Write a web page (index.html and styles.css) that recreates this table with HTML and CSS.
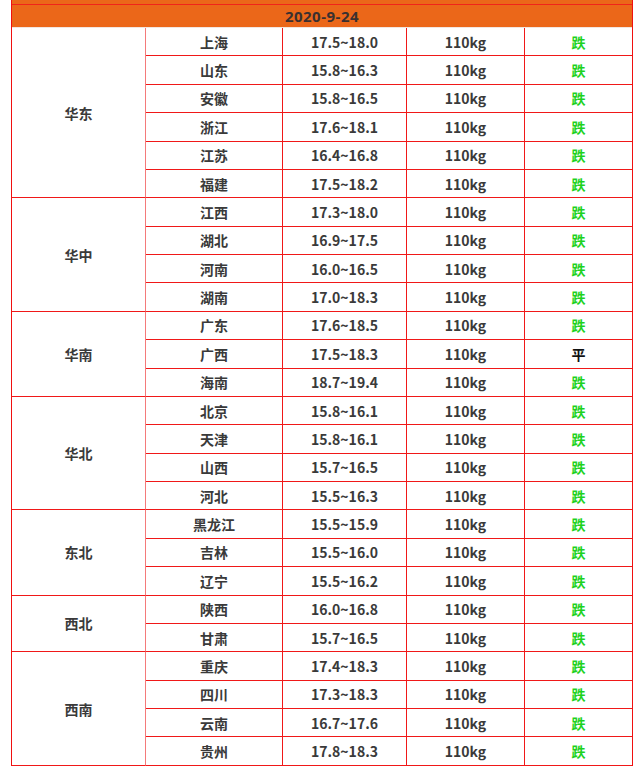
FILE: index.html
```html
<!DOCTYPE html>
<html lang="zh-CN">
<head>
<meta charset="utf-8">
<title>猪价</title>
<link rel="stylesheet" href="styles.css">
</head>
<body>
<div class="sheet">
  <div class="cap"></div>
  <div class="date">2020-9-24</div>
  <div class="grid">
    <div class="region r6">华东</div>
    <div class="c">上海</div><div class="c">17.5~18.0</div><div class="c">110kg</div><div class="c last down">跌</div>
    <div class="c">山东</div><div class="c">15.8~16.3</div><div class="c">110kg</div><div class="c last down">跌</div>
    <div class="c">安徽</div><div class="c">15.8~16.5</div><div class="c">110kg</div><div class="c last down">跌</div>
    <div class="c">浙江</div><div class="c">17.6~18.1</div><div class="c">110kg</div><div class="c last down">跌</div>
    <div class="c">江苏</div><div class="c">16.4~16.8</div><div class="c">110kg</div><div class="c last down">跌</div>
    <div class="c">福建</div><div class="c">17.5~18.2</div><div class="c">110kg</div><div class="c last down">跌</div>

    <div class="region r4">华中</div>
    <div class="c">江西</div><div class="c">17.3~18.0</div><div class="c">110kg</div><div class="c last down">跌</div>
    <div class="c">湖北</div><div class="c">16.9~17.5</div><div class="c">110kg</div><div class="c last down">跌</div>
    <div class="c">河南</div><div class="c">16.0~16.5</div><div class="c">110kg</div><div class="c last down">跌</div>
    <div class="c">湖南</div><div class="c">17.0~18.3</div><div class="c">110kg</div><div class="c last down">跌</div>

    <div class="region r3">华南</div>
    <div class="c">广东</div><div class="c">17.6~18.5</div><div class="c">110kg</div><div class="c last down">跌</div>
    <div class="c">广西</div><div class="c">17.5~18.3</div><div class="c">110kg</div><div class="c last flat">平</div>
    <div class="c">海南</div><div class="c">18.7~19.4</div><div class="c">110kg</div><div class="c last down">跌</div>

    <div class="region r4">华北</div>
    <div class="c">北京</div><div class="c">15.8~16.1</div><div class="c">110kg</div><div class="c last down">跌</div>
    <div class="c">天津</div><div class="c">15.8~16.1</div><div class="c">110kg</div><div class="c last down">跌</div>
    <div class="c">山西</div><div class="c">15.7~16.5</div><div class="c">110kg</div><div class="c last down">跌</div>
    <div class="c">河北</div><div class="c">15.5~16.3</div><div class="c">110kg</div><div class="c last down">跌</div>

    <div class="region r3">东北</div>
    <div class="c">黑龙江</div><div class="c">15.5~15.9</div><div class="c">110kg</div><div class="c last down">跌</div>
    <div class="c">吉林</div><div class="c">15.5~16.0</div><div class="c">110kg</div><div class="c last down">跌</div>
    <div class="c">辽宁</div><div class="c">15.5~16.2</div><div class="c">110kg</div><div class="c last down">跌</div>

    <div class="region r2">西北</div>
    <div class="c">陕西</div><div class="c">16.0~16.8</div><div class="c">110kg</div><div class="c last down">跌</div>
    <div class="c">甘肃</div><div class="c">15.7~16.5</div><div class="c">110kg</div><div class="c last down">跌</div>

    <div class="region r4">西南</div>
    <div class="c">重庆</div><div class="c">17.4~18.3</div><div class="c">110kg</div><div class="c last down">跌</div>
    <div class="c">四川</div><div class="c">17.3~18.3</div><div class="c">110kg</div><div class="c last down">跌</div>
    <div class="c">云南</div><div class="c">16.7~17.6</div><div class="c">110kg</div><div class="c last down">跌</div>
    <div class="c">贵州</div><div class="c">17.8~18.3</div><div class="c">110kg</div><div class="c last down">跌</div>
  </div>
</div>
</body>
</html>
```

FILE: styles.css
```css
html, body {
  margin: 0;
  padding: 0;
  background: #ffffff;
}

body {
  font-family: "Noto Sans CJK SC", "Open Sans", sans-serif;
  font-weight: 700;
  font-size: 14px;
  color: #3a3a3a;
}

.sheet {
  margin-left: 11px;
  width: 620px;
  border-left: 1px solid #f01010;
  border-right: 1px solid #f01010;
}

.cap {
  height: 4px;
  background: #eb6719;
  border-bottom: 1px solid #f0241a;
}

.date {
  height: 22px;
  line-height: 22px;
  background: #eb6719;
  border-bottom: 1px solid #f2e6e0;
  text-align: center;
  color: #3a3030;
  font-family: "Open Sans", "Noto Sans CJK SC", sans-serif;
  font-size: 15px;
  letter-spacing: 0.5px;
}

.grid {
  display: grid;
  grid-template-columns: 134px 137px 124px 118px 107px;
  grid-template-rows: repeat(26, 28.38px);
}

.grid > div {
  display: flex;
  align-items: center;
  justify-content: center;
  border-bottom: 1px solid #f01818;
  border-right: 1px solid #f01818;
  box-sizing: border-box;
  white-space: nowrap;
}

.grid > .last {
  border-right: none;
}

.region { grid-column: 1; border-right-color: #f47a7a !important; }
.r2 { grid-row: span 2; }
.r3 { grid-row: span 3; }
.r4 { grid-row: span 4; }
.r6 { grid-row: span 6; }

.down { color: #1ed21e; }
.flat { color: #111111; }
```
